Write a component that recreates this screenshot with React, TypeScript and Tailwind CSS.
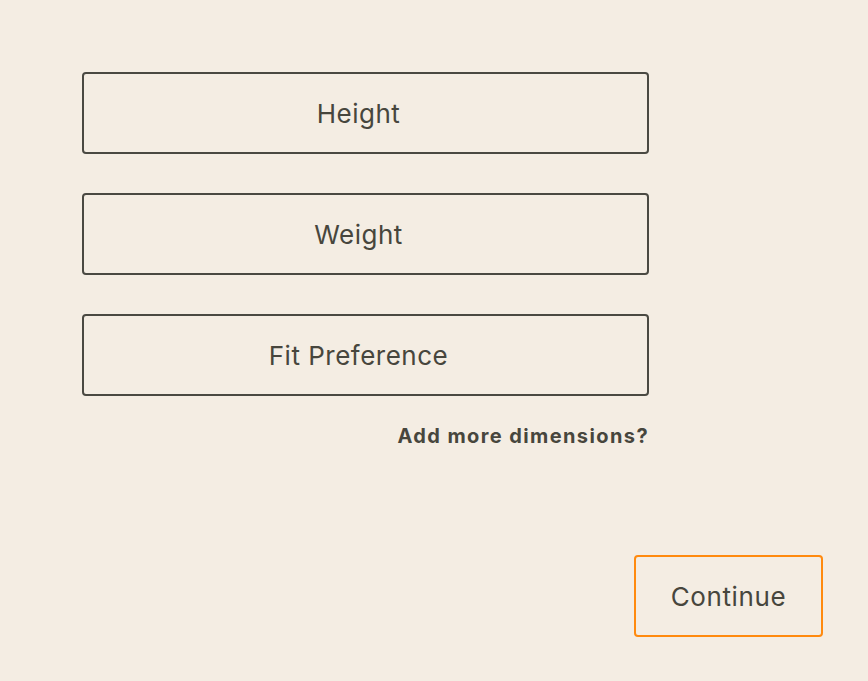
export default function App() {
  const fields = ["Height", "Weight", "Fit Preference"];

  return (
    <div
      className="min-h-[681px] w-full bg-[#f4ede3] text-[#47463d]"
      style={{ fontFamily: "Inter, 'Noto Sans', sans-serif" }}
    >
      <div className="pl-[82px] pt-[72px]">
        <div className="flex w-[567px] flex-col gap-[39px]">
          {fields.map((label) => (
            <button
              key={label}
              className="flex h-[82px] items-center justify-center rounded-[4px] border-2 border-[#4a4942] pr-[14px] text-[26px] font-normal tracking-[0.5px]"
            >
              {label}
            </button>
          ))}
        </div>
        <div className="mt-[25px] flex w-[567px] justify-end">
          <span className="text-[20px] font-bold tracking-[1.4px] text-[#47463d]">Add more dimensions?</span>
        </div>
      </div>
      <div className="mt-[104px] flex justify-end pr-[45px]">
        <button className="flex h-[82px] w-[189px] items-center justify-center rounded-[4px] border-2 border-[#ff8a0f] text-[26px] tracking-[0.6px]">
          Continue
        </button>
      </div>
    </div>
  );
}
